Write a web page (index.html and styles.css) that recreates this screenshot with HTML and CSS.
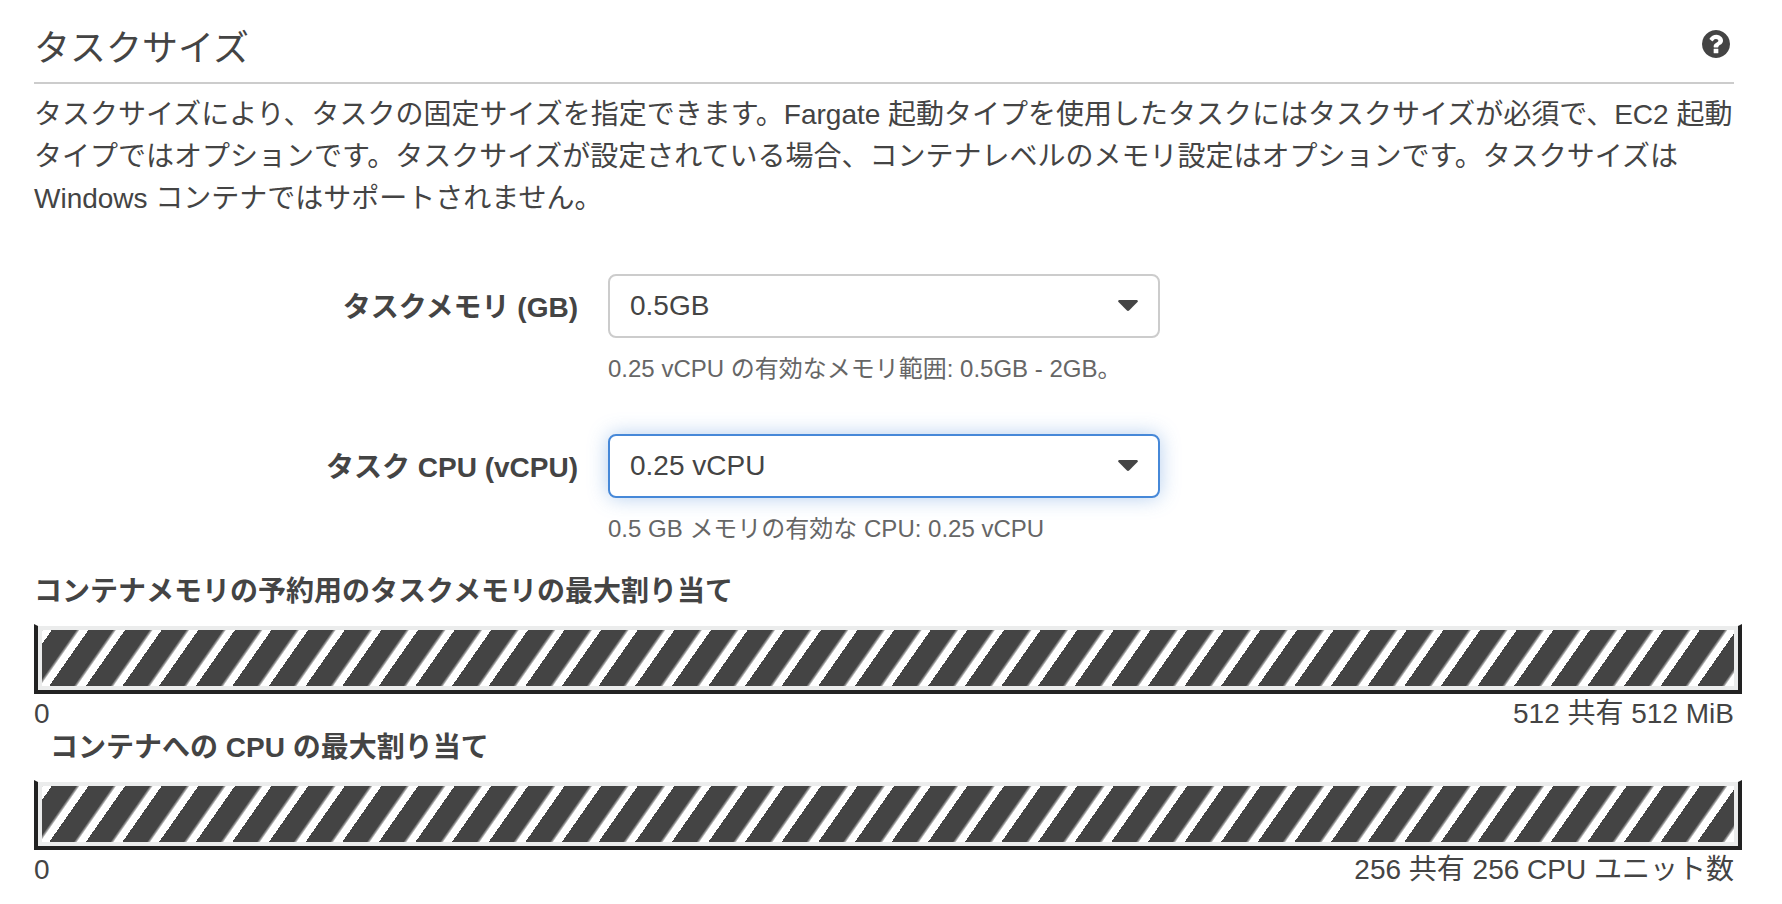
FILE: index.html
```html
<!DOCTYPE html>
<html lang="ja">
<head>
<meta charset="utf-8">
<title>タスクサイズ</title>
<link rel="stylesheet" href="styles.css">
</head>
<body>
<main class="panel">
  <header class="panel-header">
    <h1 class="panel-title">タスクサイズ</h1>
    <button class="help" type="button" aria-label="ヘルプ">
      <svg class="help-icon" viewBox="128 128 1536 1536" aria-hidden="true"><path fill="currentColor" d="M1024 1376v-192q0-14-9-23t-23-9h-192q-14 0-23 9t-9 23v192q0 14 9 23t23 9h192q14 0 23-9t9-23zm256-672q0-88-55.5-163t-138.5-116-170-41q-243 0-371 213-15 24 8 42l132 100q7 6 19 6 16 0 25-12 53-68 86-92 34-24 86-24 48 0 85.500 26t37.500 59q0 38-20 61t-68 45q-63 28-115.500 86.500t-52.500 125.500v36q0 14 9 23t23 9h192q14 0 23-9t9-23q0-19 21.500-49.500t54.500-49.500q32-18 49-28.500t46-35 44.500-48 28-60.500 12.500-81zm384 192q0 209-103 385.500t-279.500 279.500-385.500 103-385.500-103-279.500-279.500-103-385.500 103-385.500 279.500-279.500 385.500-103 385.500 103 279.500 279.500 103 385.500z"/></svg>
    </button>
  </header>
  <p class="intro">タスクサイズにより、タスクの固定サイズを指定できます。Fargate 起動タイプを使用したタスクにはタスクサイズが必須で、EC2 起動タイプではオプションです。タスクサイズが設定されている場合、コンテナレベルのメモリ設定はオプションです。タスクサイズは Windows コンテナではサポートされません。</p>

  <form class="form">
    <div class="field">
      <label class="field-label" for="memory">タスクメモリ (GB)</label>
      <div class="field-body">
        <div class="select-wrap">
          <select class="select" id="memory" aria-describedby="memory-hint"><option>0.5GB</option></select>
          <svg class="caret" viewBox="0 0 20 11" aria-hidden="true"><path fill="currentColor" d="M1.200 0h17.600q1.800 0.500 0.700 2l-8.200 8.300q-1.300 1.200-2.600 0L0.500 2Q-0.600 0.500 1.200 0z"/></svg>
        </div>
        <p class="hint" id="memory-hint">0.25 vCPU の有効なメモリ範囲: 0.5GB - 2GB。</p>
      </div>
    </div>
    <div class="field">
      <label class="field-label" for="cpu">タスク CPU (vCPU)</label>
      <div class="field-body">
        <div class="select-wrap">
          <select class="select select-active" id="cpu" aria-describedby="cpu-hint"><option>0.25 vCPU</option></select>
          <svg class="caret" viewBox="0 0 20 11" aria-hidden="true"><path fill="currentColor" d="M1.200 0h17.600q1.800 0.500 0.700 2l-8.200 8.300q-1.300 1.200-2.600 0L0.500 2Q-0.600 0.500 1.200 0z"/></svg>
        </div>
        <p class="hint" id="cpu-hint">0.5 GB メモリの有効な CPU: 0.25 vCPU</p>
      </div>
    </div>
  </form>

  <section class="allocation">
    <h2 class="allocation-title">コンテナメモリの予約用のタスクメモリの最大割り当て</h2>
    <div class="gauge"><div class="gauge-fill"></div></div>
    <div class="scale"><span>0</span><span>512 共有 512 MiB</span></div>
  </section>
  <section class="allocation">
    <h2 class="allocation-title allocation-title-indented">コンテナへの CPU の最大割り当て</h2>
    <div class="gauge"><div class="gauge-fill"></div></div>
    <div class="scale"><span>0</span><span>256 共有 256 CPU ユニット数</span></div>
  </section>
</main>
</body>
</html>
```
FILE: styles.css
```css
* { box-sizing: border-box; }

body {
  margin: 0;
  background: #fff;
  color: #444;
  font-family: "Liberation Sans", "Noto Sans CJK JP", sans-serif;
  font-size: 28px;
  line-height: 42px;
}

.panel { padding: 24px 40px 0 34px; }

.panel-header {
  display: flex;
  justify-content: space-between;
  align-items: flex-start;
  height: 60px;
  margin-right: 8px;
  padding-right: 4px;
  border-bottom: 2px solid #ccc;
}

.panel-title {
  margin: 0;
  font-size: 36px;
  font-weight: 400;
  line-height: 50px;
}

.help {
  margin: 6px 0 0;
  padding: 0;
  border: 0;
  background: none;
  color: #444;
  line-height: 0;
}

.help-icon { width: 28px; height: 28px; }

.intro { margin: 10px 8px 0 0; }

.form { margin-top: 54px; }

.field {
  display: grid;
  grid-template-columns: 32% 1fr;
  column-gap: 30px;
  margin-right: 8px;
  height: 160px;
}

.field-label {
  font-weight: 700;
  line-height: 68px;
  text-align: right;
}

.select-wrap {
  position: relative;
  max-width: 552px;
}

.select {
  display: block;
  width: 100%;
  height: 64px;
  padding: 0 60px 0 20px;
  border: 2px solid #ccc;
  border-radius: 8px;
  appearance: none;
  background: #fff;
  color: #444;
  font: inherit;
}

.select-active {
  border-color: #4688d8;
  box-shadow: 0 0 20px rgba(70, 136, 216, 0.4);
}

.caret {
  position: absolute;
  top: 26px;
  right: 22px;
  width: 20px;
  height: 11px;
  pointer-events: none;
}

.hint {
  margin: 14px 0 0;
  color: #666;
  font-size: 24px;
  line-height: 34px;
}

.allocation-title {
  margin: 0 0 18px;
  font-size: 28px;
  line-height: 28px;
}

.allocation-title-indented { margin-left: 16px; }

.form + .allocation { margin-top: -16px; }

.gauge {
  padding: 4px;
  border: 4px solid #222;
  border-top: 2px solid transparent;
  background: #ebecec;
  background-clip: padding-box;
}

.gauge-fill {
  height: 56px;
  background: repeating-linear-gradient(125deg, #aaa 0, #fff 1px, #fff 8px, #444 8px, #444 28px, #aaa 30px);
}

.scale {
  display: flex;
  justify-content: space-between;
  padding-right: 8px;
  line-height: 40px;
}
```
